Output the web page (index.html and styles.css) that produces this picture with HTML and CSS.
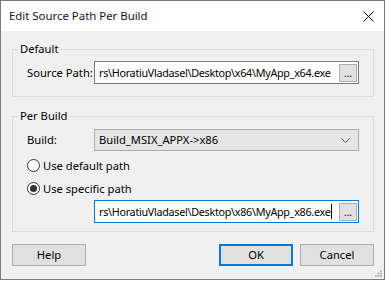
FILE: index.html
```html
<!DOCTYPE html>
<html lang="en">
<head>
  <meta charset="UTF-8" />
  <title>Edit Source Path Per Build</title>
  <link rel="stylesheet" href="styles.css">
</head>
<body>
  <div class="dialog">
    <div class="titlebar">
      <span class="title">Edit Source Path Per Build</span>
      <span class="close">
        <svg width="11" height="11" viewBox="0 0 11 11"><path d="M0.5 0.5L10.5 10.5M10.5 0.5L0.5 10.5" stroke="#000" stroke-width="1" fill="none"/></svg>
      </span>
    </div>
    <div class="content">
      <fieldset class="group group-default">
        <legend>Default</legend>
        <div class="row">
          <label class="label">Source Path:</label>
          <div class="edit">
            <span class="edit-text">rs\HoratiuVladasel\Desktop\x64\MyApp_x64.exe</span>
            <button class="browse">...</button>
          </div>
        </div>
      </fieldset>

      <fieldset class="group group-build">
        <legend>Per Build</legend>
        <div class="row">
          <label class="label">Build:</label>
          <div class="combo">
            <span class="combo-text">Build_MSIX_APPX-&gt;x86</span>
            <svg class="chevron" width="9" height="5" viewBox="0 0 9 5"><path d="M0.5 0.5L4.5 4.5L8.5 0.5" stroke="#555" fill="none"/></svg>
          </div>
        </div>
        <div class="radio-row first">
          <span class="radio"></span>
          <span>Use default path</span>
        </div>
        <div class="radio-row">
          <span class="radio checked"></span>
          <span>Use specific path</span>
        </div>
        <div class="row indent">
          <div class="edit focused">
            <span class="edit-text">rs\HoratiuVladasel\Desktop\x86\MyApp_x86.exe<span class="caret"></span></span>
            <button class="browse">...</button>
          </div>
        </div>
      </fieldset>

      <div class="buttons">
        <button class="btn">Help</button>
        <span class="spacer"></span>
        <button class="btn default">OK</button>
        <button class="btn">Cancel</button>
      </div>
      <span class="gripper">
        <svg width="7" height="7" viewBox="0 0 7 7" fill="#bcbcbc">
          <rect x="5" y="0" width="2" height="2"/>
          <rect x="2.5" y="2.5" width="2" height="2"/><rect x="5" y="2.5" width="2" height="2"/>
          <rect x="0" y="5" width="2" height="2"/><rect x="2.5" y="5" width="2" height="2"/><rect x="5" y="5" width="2" height="2"/>
        </svg>
      </span>
    </div>
  </div>
</body>
</html>
```

FILE: styles.css
```css
* {
  box-sizing: border-box;
}
body {
  margin: 0;
  background: #fff;
  font-family: "Noto Sans", "Open Sans", sans-serif;
  font-size: 11.2px;
  line-height: 16px;
  color: #000;
}
.dialog {
  width: 385px;
  height: 280px;
  border: 1px solid #7a7a7a;
  display: flex;
  flex-direction: column;
}
.titlebar {
  height: 30px;
  background: #fff;
  display: flex;
  align-items: center;
  padding: 0 9px 0 8px;
  font-size: 11.4px;
}
.title {
  flex: 1;
  color: #1a0f1e;
}
.close {
  display: flex;
  margin-right: 1px;
}
.content {
  flex: 1;
  background: #f0f0f0;
  padding: 10px 10px 0 11px;
  position: relative;
}
.group {
  margin: 0;
  border: 1px solid #dcdcdc;
  padding: 0 14px;
  min-width: 0;
}
.group legend {
  padding: 0 2px;
  margin-left: -9px;
  line-height: 16px;
}
.group-default {
  padding-top: 4px;
  padding-bottom: 12px;
}
.group-build {
  margin-top: 11px;
  padding-top: 5px;
  padding-bottom: 8px;
}
.row {
  display: flex;
  align-items: center;
}
.indent {
  padding-left: 67px;
}
.label {
  width: 67px;
  flex-shrink: 0;
}
.edit {
  flex: 1;
  height: 23px;
  border: 1px solid #7a7a7a;
  background: #fff;
  display: flex;
  align-items: center;
  gap: 3px;
  padding: 0 1px 0 4px;
  min-width: 0;
}
.edit.focused {
  border-color: #0078d7;
}
.edit-text {
  flex: 1;
  white-space: nowrap;
  overflow: hidden;
  display: flex;
  align-items: center;
  font-size: 10.8px;
  letter-spacing: -0.3px;
}
.caret {
  display: inline-block;
  width: 1px;
  height: 15px;
  margin-left: 1px;
  background: #000;
}
.browse {
  width: 18px;
  height: 18px;
  padding: 0 0 3px;
  border: 1px solid #adadad;
  background: #e1e1e1;
  font: inherit;
  font-size: 10px;
  line-height: 10px;
  display: flex;
  align-items: flex-end;
  justify-content: center;
  flex-shrink: 0;
}
.combo {
  flex: 1;
  height: 22px;
  border: 1px solid #adadad;
  background: #e5e5e5;
  display: flex;
  align-items: center;
  padding: 0 8px 0 4px;
}
.combo-text {
  flex: 1;
}
.radio-row {
  display: flex;
  align-items: center;
  gap: 3px;
  height: 23px;
}
.radio-row.first {
  margin-top: 3px;
}
.radio {
  width: 13px;
  height: 13px;
  border: 1px solid #333;
  border-radius: 50%;
  background: #fff;
  display: flex;
  align-items: center;
  justify-content: center;
}
.radio.checked::after {
  content: "";
  width: 7px;
  height: 7px;
  border-radius: 50%;
  background: #333;
}
.buttons {
  display: flex;
  gap: 7px;
  margin-top: 12px;
}
.spacer {
  flex: 1;
}
.btn {
  width: 74px;
  height: 22px;
  border: 1px solid #adadad;
  background: #e1e1e1;
  font: inherit;
  color: #000;
  padding: 0;
}
.btn.default {
  border: 2px solid #0078d7;
}
.gripper {
  position: absolute;
  right: 2px;
  bottom: 2px;
  display: flex;
}
```
